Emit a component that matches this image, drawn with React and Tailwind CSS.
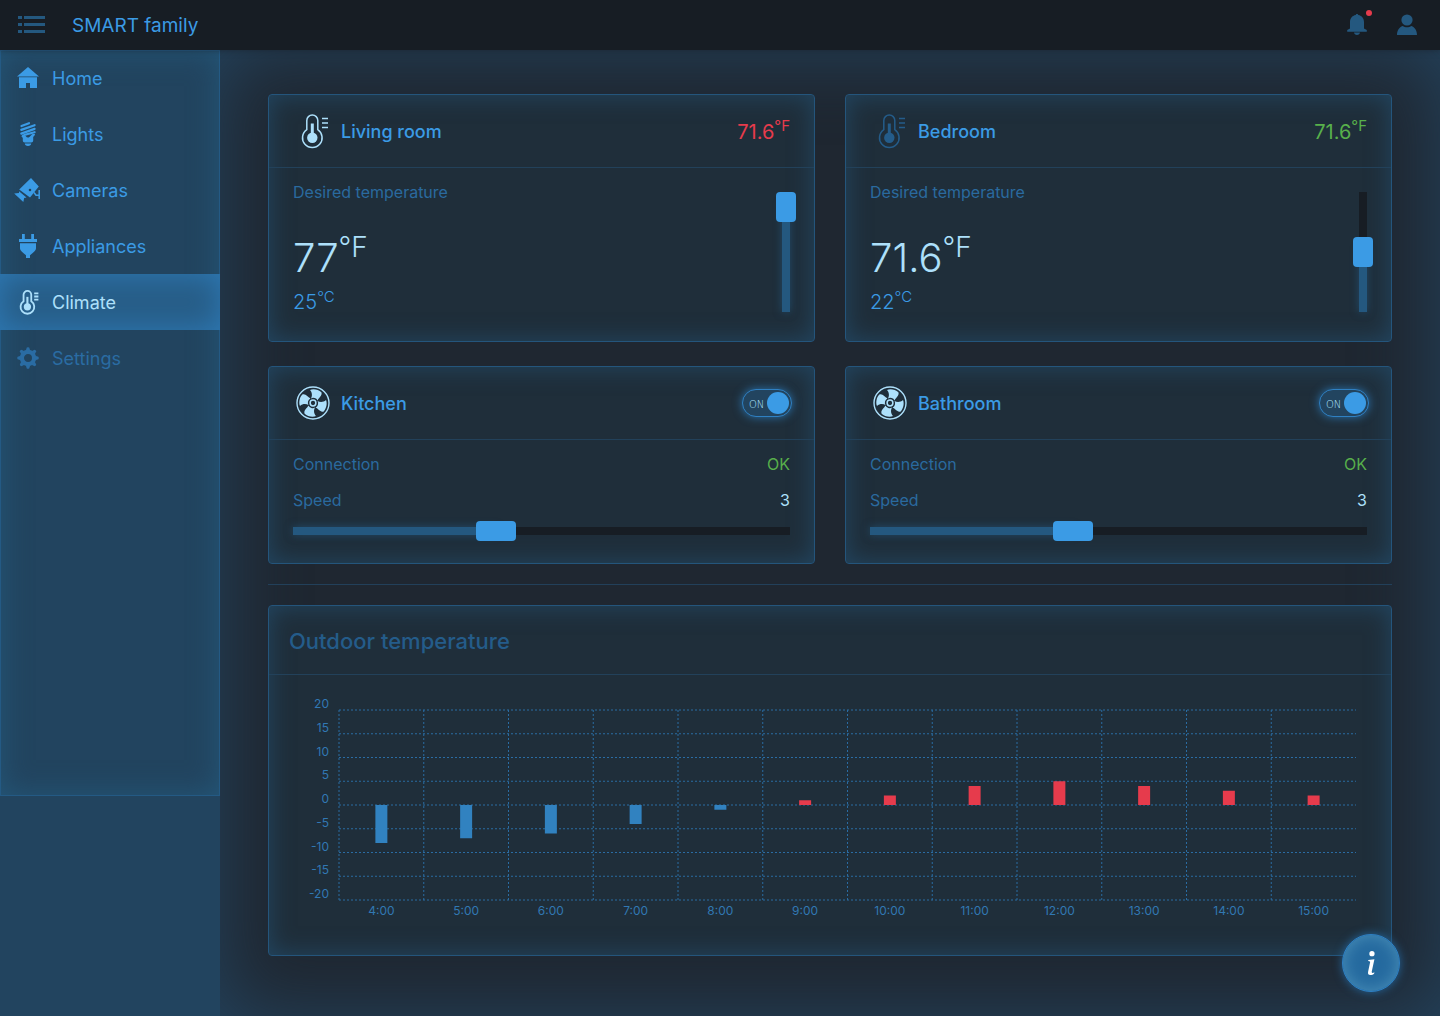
import { useState } from "react";
import { BsInfoLg } from "react-icons/bs";

function HomeIcon() {
  return (
    <svg viewBox="0 0 24 24" className="size-6 shrink-0 fill-current" aria-hidden="true">
      <path d="M12 1 23 10.5H1z" />
      <path d="M3 11.3h18V22h-7v-5h-4v5H3z" />
    </svg>
  );
}

function BulbIcon() {
  return (
    <svg viewBox="0 0 24 24" className="size-6 shrink-0 overflow-visible" aria-hidden="true">
      <g fill="none" stroke="currentColor" strokeWidth="2.200" strokeLinecap="round">
        <path d="M5.500 4 13 1.200" />
        <path d="M5.300 7.900 18.600 3.200" />
        <path d="M5.300 11.600 18.600 6.900" />
        <path d="M6.600 14.300c.3-1.400 2-1.300 4.200-2.100l7.800-2" />
      </g>
      <path
        fill="currentColor"
        d="M6 13.600h2.800c1 0 1.200 2 3.200 2s3.400-3.600 4.700-3.600h2.200c.6 1.500-1.700 2-1.700 3.200V18.500c0 1.300-.8 2-2 2H8.800c-1.200 0-2-.7-2-2v-2.700z"
      />
      <path fill="currentColor" d="M8.800 21.400h6.400c0 1.600-1.300 2.500-3.200 2.500s-3.200-.9-3.200-2.500z" />
    </svg>
  );
}

function CameraIcon() {
  return (
    <svg viewBox="0 0 24 24" className="size-6 shrink-0 overflow-visible" aria-hidden="true">
      <path
        fill="currentColor"
        fillRule="evenodd"
        d="M15 0 22.800 8.600 14 19.400 3.200 11.600zM14 10.700a1.300 1.300 0 1 0 0 2.600a1.300 1.300 0 1 0 0-2.600z"
      />
      <path fill="currentColor" d="M3 13.200 10.500 19.600 8.200 20 7.300 24 -1.800 15.400 3 15z" />
      <path fill="none" stroke="currentColor" strokeWidth="1.500" d="M18 14.500 20 17.200h3.200M23.200 12v9" />
    </svg>
  );
}

function PlugIcon() {
  return (
    <svg viewBox="0 0 24 24" className="size-6 shrink-0 fill-current" aria-hidden="true">
      <path d="M6 0h2.800v5H6zM15.200 0H18v5h-2.800zM3 5h18v3H3z" />
      <path d="M4 9.300h16v5.200c0 1.700-2.500 4-6 6.800V24h-4v-2.700c-3.500-2.800-6-5.100-6-6.800z" />
    </svg>
  );
}

const TEETH = [0, 45, 90, 135, 180, 225, 270, 315];

function GearIcon() {
  return (
    <svg viewBox="0 0 24 24" className="size-6 shrink-0" aria-hidden="true">
      <circle cx="12" cy="12" r="6.100" fill="none" stroke="currentColor" strokeWidth="4.200" />
      {TEETH.map((a) => (
        <path
          key={a}
          fill="currentColor"
          d="M9.700 4.800 10.800 1.600Q12 .8 13.200 1.600L14.300 4.800z"
          transform={`rotate(${a} 12 12)`}
        />
      ))}
    </svg>
  );
}

function ThermometerShape({ stroke }) {
  return (
    <>
      <path
        fill="none"
        stroke="currentColor"
        strokeWidth={stroke}
        d="M13.800 18.700V9.500a5.500 5.500 0 0 1 11 0v9.200a9.800 9.800 0 1 1-11 0z"
      />
      <circle cx="19.300" cy="26.700" r="5.200" fill="currentColor" />
      <path stroke="currentColor" strokeWidth="3" d="M19.300 12.500V25" />
      <path stroke="currentColor" strokeWidth={stroke} d="M29 7.500h6M29 12h6M29 16.500h6" />
    </>
  );
}

function ThermometerSmall() {
  return (
    <svg viewBox="3 2.7 34.3 34.3" className="size-6 shrink-0 overflow-visible" aria-hidden="true">
      <ThermometerShape stroke="2.600" />
    </svg>
  );
}

function ThermometerLarge() {
  return (
    <svg viewBox="0 0 40 40" className="size-10 shrink-0" aria-hidden="true">
      <ThermometerShape stroke="1.500" />
    </svg>
  );
}

function FanIcon() {
  return (
    <svg viewBox="0 0 40 40" className="size-10 shrink-0" aria-hidden="true">
      <circle cx="20" cy="20" r="16" fill="none" stroke="currentColor" strokeWidth="1.400" />
      <circle cx="20" cy="20" r="2.900" fill="none" stroke="currentColor" strokeWidth="1.500" />
      {[0, 90, 180, 270].map((a) => (
        <path
          key={a}
          fill="currentColor"
          transform={`rotate(${a} 20 20)`}
          d="M17 7C20 5.600 25.500 6.400 28.400 9.300C29.600 12.800 25.800 14.600 24.600 17.400A5 5 0 0 0 18 15.400C19.400 13.200 19.400 9.500 17 7z"
        />
      ))}
    </svg>
  );
}

const NAV = [
  { label: "Home", Icon: HomeIcon, tone: "text-[#3b9be5]" },
  { label: "Lights", Icon: BulbIcon, tone: "text-[#3b9be5]" },
  { label: "Cameras", Icon: CameraIcon, tone: "text-[#3b9be5]" },
  { label: "Appliances", Icon: PlugIcon, tone: "text-[#3b9be5]" },
  {
    label: "Climate",
    Icon: ThermometerSmall,
    tone: "bg-[#275d87] text-[#ade0fb] shadow-[inset_0_0_30px_#2e7ab6]",
    current: true,
  },
  { label: "Settings", Icon: GearIcon, tone: "text-[#2a6ca3]" },
];

function Header() {
  return (
    <header className="z-10 flex h-[50px] items-center bg-[#171d24] pr-2 pl-4 shadow-[0_0_6px_rgba(23,29,36,0.6)]">
      <button type="button" aria-label="Menu" className="flex text-[#24587f]">
        <svg viewBox="0 0 32 24" className="h-6 w-8 fill-current" aria-hidden="true">
          <path d="M2 3h4v3H2zM8 3h21v3H8zM2 10h4v3H2zM8 10h21v3H8zM2 17h4v3H2zM8 17h21v3H8z" />
        </svg>
      </button>
      <h1 className="ml-6 flex-1 pt-0.5 text-[19px] text-[#3b9be5]">SMART family</h1>
      <button type="button" aria-label="Notifications" className="flex size-[50px] items-center justify-center text-[#24587f]">
        <svg viewBox="0 0 50 50" className="size-[50px]" aria-hidden="true">
          <path
            fill="currentColor"
            d="M25 14c.8 0 1.200.5 1.300 1.100C30 15.800 32 18.600 32 22v6.500l2.800 1.500v1.800H15.200V30L18 28.500V22c0-3.400 2-6.200 5.700-6.900.1-.6.500-1.100 1.300-1.100zM22 32.600h6c-.2 1.500-1.300 2.400-3 2.400s-2.800-.9-3-2.400z"
          />
          <circle cx="37" cy="13" r="3" fill="#e63b4c" />
        </svg>
      </button>
      <button type="button" aria-label="Account" className="flex size-[50px] items-center justify-center text-[#24587f]">
        <svg viewBox="0 0 50 50" className="size-[50px] fill-current" aria-hidden="true">
          <circle cx="25" cy="20" r="5.600" />
          <path d="M15 35c0-4.500 2.300-7.600 5.600-9 2.600 1.800 6.200 1.800 8.800 0 3.300 1.400 5.600 4.500 5.600 9z" />
        </svg>
      </button>
    </header>
  );
}

function Sidebar() {
  return (
    <aside className="flex w-[220px] shrink-0 flex-col bg-[#22445f]">
      <nav className="mb-[220px] flex-1 shadow-[inset_0_0_0_1px_#245a84,inset_0_0_30px_#24587a]">
        <ul>
          {NAV.map(({ label, Icon, tone, current }) => (
            <li key={label}>
              <a
                href="#"
                aria-current={current ? "page" : undefined}
                className={`flex h-14 items-center gap-3 pl-4 text-lg ${tone}`}
              >
                <Icon />
                <span className="pt-0.5">{label}</span>
              </a>
            </li>
          ))}
        </ul>
      </nav>
    </aside>
  );
}

const CARD =
  "rounded border border-[#24557c] bg-[#1f2e3a] shadow-[inset_0_0_24px_rgba(36,88,127,0.6)]";
const CARD_TITLE = "flex-1 pt-0.5 text-lg font-medium text-[#3b9be5]";

function ClimateCard({ title, reading, readingTone, iconTone, initial }) {
  const [celsius, setCelsius] = useState(initial);
  const share = (celsius - 19) / 6;
  const fahrenheit = Math.round((celsius * 1.8 + 32) * 10) / 10;
  const id = `${title.toLowerCase().replace(" ", "-")}-temperature`;
  return (
    <section className={CARD}>
      <header className="flex h-[73px] items-center gap-2 border-b border-[#22415a] px-6">
        <span className={iconTone}>
          <ThermometerLarge />
        </span>
        <h2 className={CARD_TITLE}>{title}</h2>
        <p className={`pt-0.5 text-xl leading-7 ${readingTone}`}>
          {reading}
          <sup className="top-0 align-[8px] text-[15px] leading-0">°F</sup>
        </p>
      </header>
      <div className="flex pr-[18px] pb-[25px] pl-6">
        <div className="flex-1 pt-3">
          <label htmlFor={id} className="block text-base leading-6 text-[#2a6a9f]">
            Desired temperature
          </label>
          <p className="mt-[30px] text-[40px] leading-12 font-light text-[#ade0fb]">
            {fahrenheit}
            <sup className="top-0 align-[15px] text-[28px] leading-0">°F</sup>
          </p>
          <p className="mt-1.5 text-xl leading-7 font-light text-[#3b9be5]">
            {celsius}
            <sup className="top-0 align-[7px] text-[15px] leading-0">°C</sup>
          </p>
        </div>
        <div className="mt-6 grid h-[120px] w-5 justify-items-center">
          <div className="col-start-1 row-start-1 flex h-full w-2 flex-col justify-end bg-[#171d24]">
            <div
              className="bg-[#24587f] shadow-[0_0_8px_rgba(36,88,127,0.7)]"
              style={{ height: `${15 + share * 75}%` }}
            />
          </div>
          <input
            id={id}
            type="range"
            min="19"
            max="25"
            value={celsius}
            onChange={(e) => setCelsius(Number(e.target.value))}
            className="z-1 col-start-1 row-start-1 h-[120px] w-5 appearance-none bg-transparent [direction:rtl] [writing-mode:vertical-lr] [&::-webkit-slider-thumb]:h-[30px] [&::-webkit-slider-thumb]:w-5 [&::-webkit-slider-thumb]:appearance-none [&::-webkit-slider-thumb]:rounded [&::-webkit-slider-thumb]:bg-[#3b9be5]"
          />
        </div>
      </div>
    </section>
  );
}

function FanCard({ title }) {
  const [on, setOn] = useState(true);
  const [speed, setSpeed] = useState(3);
  const share = (speed - 1) / 5;
  const id = `${title.toLowerCase()}-speed`;
  return (
    <section className={CARD}>
      <header className="flex h-[73px] items-center gap-2 border-b border-[#22415a] pr-[22px] pl-6">
        <span className="text-[#ade0fb]">
          <FanIcon />
        </span>
        <h2 className={CARD_TITLE}>{title}</h2>
        <label className="grid h-7 w-[50px] items-center">
          <input
            type="checkbox"
            role="switch"
            aria-label={`${title} fan`}
            checked={on}
            onChange={() => setOn(!on)}
            className="col-start-1 row-start-1 h-7 w-[50px] appearance-none rounded-full border border-[#2f80c2] bg-[#22445f] shadow-[0_0_10px_#2a73ad]"
          />
          <span
            className={`pointer-events-none col-start-1 row-start-1 flex items-center justify-between pr-[3px] pl-[7px] font-['DejaVu_Sans',sans-serif] text-[10px] text-[#ade0fb] ${on ? "" : "flex-row-reverse"}`}
          >
            <span className="pt-0.5 font-light">{on ? "ON" : "OFF"}</span>
            <span className="size-[22px] rounded-full bg-[#3b9be5]" />
          </span>
        </label>
      </header>
      <div className="px-6 pt-3 pb-[22px] text-base leading-6 text-[#2a6a9f]">
        <p className="flex justify-between">
          Connection <span className="text-[#58b04b]">OK</span>
        </p>
        <p className="mt-3 flex justify-between">
          <label htmlFor={id}>Speed</label>
          <output htmlFor={id} className="text-[#ade0fb]">
            {speed}
          </output>
        </p>
        <div className="mt-[9px] grid h-5 items-center">
          <div className="col-start-1 row-start-1 h-2 bg-[#171d24]">
            <div
              className="h-2 bg-[#24587f] shadow-[0_0_8px_rgba(36,88,127,0.7)]"
              style={{ width: `${4 + share * 92}%` }}
            />
          </div>
          <input
            id={id}
            type="range"
            min="1"
            max="6"
            value={speed}
            onChange={(e) => setSpeed(Number(e.target.value))}
            className="z-1 col-start-1 row-start-1 h-5 w-full appearance-none bg-transparent [&::-webkit-slider-thumb]:h-5 [&::-webkit-slider-thumb]:w-10 [&::-webkit-slider-thumb]:appearance-none [&::-webkit-slider-thumb]:rounded [&::-webkit-slider-thumb]:bg-[#3b9be5]"
          />
        </div>
      </div>
    </section>
  );
}

const HOURLY = [
  ["4:00", -8],
  ["5:00", -7],
  ["6:00", -6],
  ["7:00", -4],
  ["8:00", -1],
  ["9:00", 1],
  ["10:00", 2],
  ["11:00", 4],
  ["12:00", 5],
  ["13:00", 4],
  ["14:00", 3],
  ["15:00", 2],
];
const LEVELS = [20, 15, 10, 5, 0, -5, -10, -15, -20];
const toY = (t) => 1 + (20 - t) * 4.75;

function OutdoorChart() {
  const step = 100 / HOURLY.length;
  return (
    <section className={`${CARD} mt-5`}>
      <h2 className="flex h-[69px] items-center border-b border-[#22415a] px-5 pt-0.5 text-[22px] font-medium text-[#245c8a]">
        Outdoor temperature
      </h2>
      <div className="pt-[34px] pr-[35px] pb-[26px] pl-[70px]">
        <svg className="block h-[220px] w-full overflow-visible text-xs" role="img" aria-label="Outdoor temperature by hour">
          <g stroke="#2a6ca3" strokeDasharray="2 2">
            {LEVELS.map((t) => (
              <line key={t} x1="0" x2="100%" y1={toY(t)} y2={toY(t)} />
            ))}
            {HOURLY.map(([hour], i) => (
              <line key={hour} x1={`${i * step}%`} x2={`${i * step}%`} y1={toY(20)} y2={toY(-20)} />
            ))}
          </g>
          <g fill="#3178b3">
            {LEVELS.map((t) => (
              <text key={t} x="-10" y={toY(t) - 2} textAnchor="end">
                {t}
              </text>
            ))}
            {HOURLY.map(([hour], i) => (
              <text key={hour} x={`${(i + 0.5) * step}%`} y="206" textAnchor="middle">
                {hour}
              </text>
            ))}
          </g>
          <g strokeWidth="12">
            {HOURLY.map(([hour, t], i) => (
              <line
                key={hour}
                x1={`${(i + 0.5) * step}%`}
                x2={`${(i + 0.5) * step}%`}
                y1={toY(0)}
                y2={toY(t)}
                stroke={t < 0 ? "#3182c0" : "#e63b4c"}
              />
            ))}
          </g>
        </svg>
      </div>
    </section>
  );
}

export default function App() {
  return (
    <div className="flex min-h-screen flex-col bg-[#1f2731] font-['Inter',sans-serif]">
      <Header />
      <div className="flex flex-1">
        <Sidebar />
        <main className="min-w-0 flex-1 px-12 pt-11 pb-[60px] shadow-[inset_0_0_80px_#24445f]">
          <div className="grid grid-cols-2 gap-x-[30px] gap-y-6">
            <ClimateCard
              title="Living room"
              reading="71.6"
              readingTone="text-[#e63b4c]"
              iconTone="text-[#ade0fb]"
              initial={25}
            />
            <ClimateCard
              title="Bedroom"
              reading="71.6"
              readingTone="text-[#58b04b]"
              iconTone="text-[#245c8a]"
              initial={22}
            />
            <FanCard title="Kitchen" />
            <FanCard title="Bathroom" />
          </div>
          <hr className="mt-5 border-[#22405a]" />
          <OutdoorChart />
        </main>
      </div>
      <button
        type="button"
        aria-label="Information"
        className="fixed right-10 bottom-6 z-10 flex size-[58px] items-center justify-center rounded-full border border-[#2f80c2] bg-[#256a9f] text-[32px] text-white shadow-[0_0_10px_#24659b,inset_0_0_16px_#4a8fb8]"
      >
        <BsInfoLg aria-hidden="true" />
      </button>
    </div>
  );
}
